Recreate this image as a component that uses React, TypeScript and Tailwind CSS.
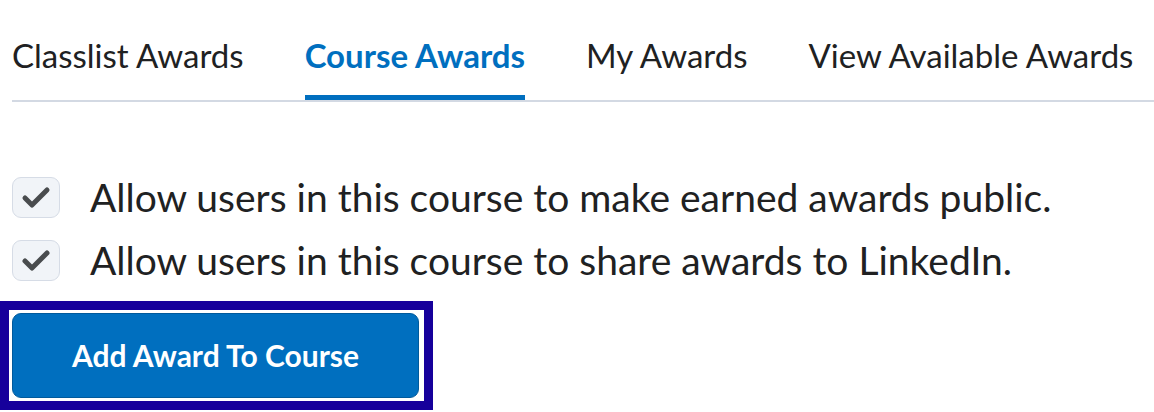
const tabs = ["Classlist Awards", "Course Awards", "My Awards", "View Available Awards"]

function Checkbox() {
  return (
    <span className="flex h-[41px] w-[48px] shrink-0 items-center justify-center rounded-[9px] border-[1.5px] border-[#d6dce6] bg-[#f1f4f8]">
      <svg width="30" height="24" viewBox="0 0 30 24" fill="none">
        <path
          d="M4 13 L11 20 L26 5"
          stroke="#494c4e"
          strokeWidth="5"
          strokeLinecap="round"
          strokeLinejoin="round"
        />
      </svg>
    </span>
  )
}

export default function App() {
  return (
    <div className="h-[412px] w-[1154px] overflow-hidden bg-white pl-[12px] font-['Lato',sans-serif] text-[#202122]">
      {/* tabs */}
      <nav className="flex gap-[61px] border-b-2 border-[#d3d9e3] pt-[30px]">
        {tabs.map((t) => {
          const active = t === "Course Awards"
          return (
            <div
              key={t}
              className={
                active
                  ? "border-b-[5px] border-[#006fbf] pb-[15px] text-[33px] font-bold leading-[50px] text-[#006fbf]"
                  : "border-b-[5px] border-transparent pb-[15px] text-[33px] leading-[50px]"
              }
            >
              {t}
            </div>
          )
        })}
      </nav>

      {/* options */}
      <div className="mt-[74px] flex flex-col gap-[21px]">
        <label className="flex items-center gap-[30px] text-[39px] leading-[42px]">
          <Checkbox />
          Allow users in this course to make earned awards public.
        </label>
        <label className="flex items-center gap-[30px] text-[39px] leading-[42px]">
          <Checkbox />
          Allow users in this course to share awards to LinkedIn.
        </label>
      </div>

      {/* focused button */}
      <div className="-ml-[12px] mt-[20px] inline-block border-[9px] border-[#16009b] p-[3px] pr-[5px]">
        <button className="h-[85px] w-[407px] rounded-[9px] border border-[#005a9c] bg-[#006fbf] text-[30px] font-bold text-white">
          Add Award To Course
        </button>
      </div>
    </div>
  )
}
